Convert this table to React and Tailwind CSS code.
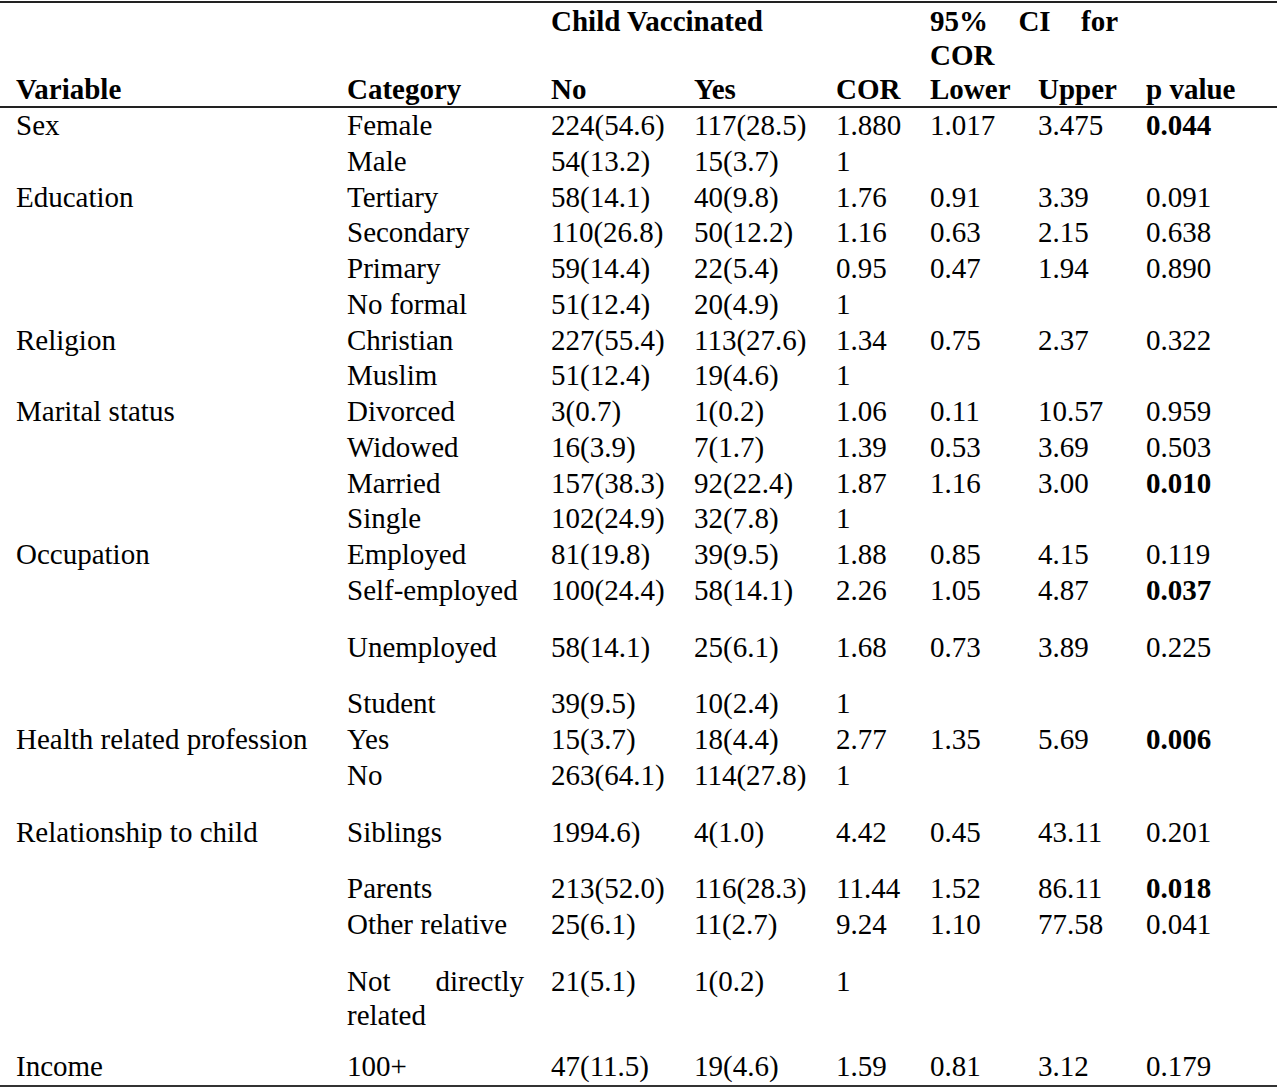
import React from "react";

const rows = [
  { v: "Sex", c: "Female", no: "224(54.6)", yes: "117(28.5)", cor: "1.880", lo: "1.017", up: "3.475", p: "0.044", b: true },
  { v: "", c: "Male", no: "54(13.2)", yes: "15(3.7)", cor: "1" },
  { v: "Education", c: "Tertiary", no: "58(14.1)", yes: "40(9.8)", cor: "1.76", lo: "0.91", up: "3.39", p: "0.091" },
  { v: "", c: "Secondary", no: "110(26.8)", yes: "50(12.2)", cor: "1.16", lo: "0.63", up: "2.15", p: "0.638" },
  { v: "", c: "Primary", no: "59(14.4)", yes: "22(5.4)", cor: "0.95", lo: "0.47", up: "1.94", p: "0.890" },
  { v: "", c: "No formal", no: "51(12.4)", yes: "20(4.9)", cor: "1" },
  { v: "Religion", c: "Christian", no: "227(55.4)", yes: "113(27.6)", cor: "1.34", lo: "0.75", up: "2.37", p: "0.322" },
  { v: "", c: "Muslim", no: "51(12.4)", yes: "19(4.6)", cor: "1" },
  { v: "Marital status", c: "Divorced", no: "3(0.7)", yes: "1(0.2)", cor: "1.06", lo: "0.11", up: "10.57", p: "0.959" },
  { v: "", c: "Widowed", no: "16(3.9)", yes: "7(1.7)", cor: "1.39", lo: "0.53", up: "3.69", p: "0.503" },
  { v: "", c: "Married", no: "157(38.3)", yes: "92(22.4)", cor: "1.87", lo: "1.16", up: "3.00", p: "0.010", b: true },
  { v: "", c: "Single", no: "102(24.9)", yes: "32(7.8)", cor: "1" },
  { v: "Occupation", c: "Employed", no: "81(19.8)", yes: "39(9.5)", cor: "1.88", lo: "0.85", up: "4.15", p: "0.119" },
  { v: "", c: "Self-employed", no: "100(24.4)", yes: "58(14.1)", cor: "2.26", lo: "1.05", up: "4.87", p: "0.037", b: true, x: 1 },
  { v: "", c: "Unemployed", no: "58(14.1)", yes: "25(6.1)", cor: "1.68", lo: "0.73", up: "3.89", p: "0.225", x: 1 },
  { v: "", c: "Student", no: "39(9.5)", yes: "10(2.4)", cor: "1" },
  { v: "Health related profession", c: "Yes", no: "15(3.7)", yes: "18(4.4)", cor: "2.77", lo: "1.35", up: "5.69", p: "0.006", b: true },
  { v: "", c: "No", no: "263(64.1)", yes: "114(27.8)", cor: "1", x: 1 },
  { v: "Relationship to child", c: "Siblings", no: "1994.6)", yes: "4(1.0)", cor: "4.42", lo: "0.45", up: "43.11", p: "0.201", x: 1 },
  { v: "", c: "Parents", no: "213(52.0)", yes: "116(28.3)", cor: "11.44", lo: "1.52", up: "86.11", p: "0.018", b: true },
  { v: "", c: "Other relative", no: "25(6.1)", yes: "11(2.7)", cor: "9.24", lo: "1.10", up: "77.58", p: "0.041", x: 1 },
  { v: "", c: "Not directly related", no: "21(5.1)", yes: "1(0.2)", cor: "1", x: 2, j: true },
  { v: "Income", c: "100+", no: "47(11.5)", yes: "19(4.6)", cor: "1.59", lo: "0.81", up: "3.12", p: "0.179" },
];

function Cell({ children, extra, className = "" }) {
  const pad = extra === 1 ? "pb-[21px]" : extra === 2 ? "pb-[17px]" : "pb-0";
  return <td className={`p-0 align-top whitespace-nowrap ${pad} ${className}`}>{children}</td>;
}

export default function App() {
  return (
    <div className="w-[1280px] h-[1087px] bg-white text-black pt-[1px] overflow-hidden" style={{ fontFamily: '"Liberation Serif", "Times New Roman", serif' }}>
      <table className="table-fixed border-collapse w-[1277px] text-[29px] leading-[35.75px]">
        <colgroup>
          <col className="w-[347px]" />
          <col className="w-[204px]" />
          <col className="w-[143px]" />
          <col className="w-[142px]" />
          <col className="w-[94px]" />
          <col className="w-[108px]" />
          <col className="w-[108px]" />
          <col className="w-[131px]" />
        </colgroup>
        <thead className="font-bold leading-[34px]">
          <tr className="border-t-2 border-[#222]">
            <th rowSpan={2} className="p-0 pl-[16px] pt-[1px] text-left align-bottom font-bold">Variable</th>
            <th rowSpan={2} className="p-0 text-left align-bottom font-bold">Category</th>
            <th colSpan={2} className="p-0 pt-[1px] text-left align-top font-bold whitespace-nowrap">Child Vaccinated</th>
            <th rowSpan={2} className="p-0 text-left align-bottom font-bold">COR</th>
            <th colSpan={2} className="p-0 pt-[1px] pr-[28px] text-justify align-top font-bold">95% CI for COR</th>
            <th rowSpan={2} className="p-0 text-left align-bottom font-bold">p value</th>
          </tr>
          <tr className="border-b-2 border-[#222]">
            <th className="p-0 text-left font-bold">No</th>
            <th className="p-0 text-left font-bold">Yes</th>
            <th className="p-0 text-left font-bold">Lower</th>
            <th className="p-0 text-left font-bold">Upper</th>
          </tr>
        </thead>
        <tbody>
          {rows.map((r, i) => (
            <tr key={i} className={i === rows.length - 1 ? "border-b-2 border-[#333]" : ""}>
              <Cell extra={r.x} className="pl-[16px]">{r.v}</Cell>
              {r.j ? (
                <td className="p-0 pr-[27px] pb-[17px] align-top text-justify leading-[34px]">{r.c}</td>
              ) : (
                <Cell extra={r.x}>{r.c}</Cell>
              )}
              <Cell extra={r.x}>{r.no}</Cell>
              <Cell extra={r.x}>{r.yes}</Cell>
              <Cell extra={r.x}>{r.cor}</Cell>
              <Cell extra={r.x}>{r.lo}</Cell>
              <Cell extra={r.x}>{r.up}</Cell>
              <Cell extra={r.x} className={r.b ? "font-bold" : ""}>{r.p}</Cell>
            </tr>
          ))}
        </tbody>
      </table>
    </div>
  );
}
